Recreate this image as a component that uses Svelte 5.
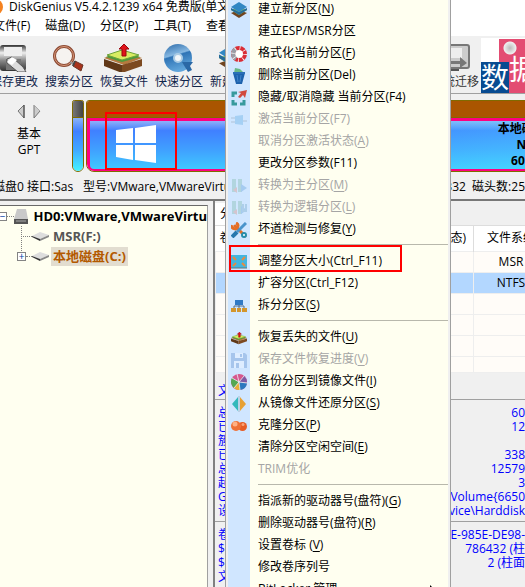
<script>
    const menus = [
        ["文件", "F"],
        ["磁盘", "D"],
        ["分区", "P"],
        ["工具", "T"],
        ["查看", "V"],
    ];

    const tools = [
        { icon: "save", label: "保存更改" },
        { icon: "search", label: "搜索分区" },
        { icon: "restore", label: "恢复文件" },
        { icon: "quick", label: "快速分区" },
        { icon: "layers", label: "新建分区" },
    ];

    const contextItems = [
        { label: "建立新分区", key: "N", icon: "layers" },
        { label: "建立ESP/MSR分区" },
        { label: "格式化当前分区", key: "F", icon: "format" },
        { label: "删除当前分区(Del)", icon: "trash" },
        { label: "隐藏/取消隐藏 当前分区(F4)", icon: "hide" },
        { label: "激活当前分区(F7)", icon: "plug", disabled: true },
        { label: "取消分区激活状态", key: "A", disabled: true },
        { label: "更改分区参数(F11)" },
        { label: "转换为主分区", key: "M", icon: "primary", disabled: true },
        { label: "转换为逻辑分区", key: "L", icon: "logical", disabled: true },
        { label: "坏道检测与修复", key: "Y", icon: "repair" },
        null,
        { label: "调整分区大小(Ctrl_F11)", icon: "resize", marked: true },
        { label: "扩容分区(Ctrl_F12)" },
        { label: "拆分分区", key: "S", icon: "split" },
        null,
        { label: "恢复丢失的文件", key: "U", icon: "restore" },
        { label: "保存文件恢复进度", key: "V", icon: "floppy", disabled: true },
        { label: "备份分区到镜像文件", key: "I", icon: "backup" },
        { label: "从镜像文件还原分区", key: "S", icon: "mirror" },
        { label: "克隆分区", key: "P", icon: "clone" },
        { label: "清除分区空闲空间", key: "E" },
        { label: "TRIM优化", disabled: true },
        null,
        { label: "指派新的驱动器号(盘符)", key: "G" },
        { label: "删除驱动器号(盘符)", key: "R" },
        { label: "设置卷标 ", key: "V" },
        { label: "修改卷序列号" },
        { label: "BitLocker 管理", submenu: true },
    ];

    const details = [
        ["总容量:", "60"],
        ["已用空间:", "12"],
        ["簇大小:", ""],
        ["已用簇数:", "338"],
        ["总扇区数:", "12579"],
        ["起始扇区号:", "3"],
        ["GUID路径:", "Volume{6650"],
        ["设备路径:", "vice\\Harddisk"],
    ];

    const ntfs = [
        ["卷序列号:", "E-985E-DE98-"],
        ["$MFT簇号:", "786432 (柱"],
        ["$MFTMirr簇号:", "2 (柱面"],
        ["文件记录大小:", ""],
    ];
</script>

{#snippet glyph(name)}
    {#if name === "save"}
        <svg viewBox="0 0 28 28">
            <defs><linearGradient id="steel" x2="0" y2="1"><stop stop-color="#333"/><stop offset=".3" stop-color="#eee"/><stop offset=".6" stop-color="#888"/><stop offset="1" stop-color="#333"/></linearGradient></defs>
            <rect x="1" y="1" width="26" height="26" rx="3" fill="url(#steel)"/>
            <rect x="5" y="3" width="18" height="9" fill="#eee"/>
            <rect x="7" y="15" width="15" height="11" fill="#777"/>
            <path d="M8 15l5-2 11 10 3 5h-8L8 19z" fill="#ddd" stroke="#555"/>
            <path d="M13 13l-5 5 5 3 5-5z" fill="#fff"/>
        </svg>
    {:else if name === "search"}
        <svg viewBox="0 0 32 28">
            <circle cx="12" cy="12" r="9.5" fill="#f6f3f0" stroke="#8c4a34" stroke-width="3"/>
            <circle cx="12" cy="12" r="9.5" fill="none" stroke="#d99a7c"/>
            <path d="M18 18l5 3" stroke="#999" stroke-width="2"/>
            <path d="M23 17l8 4-2 6-8-5z" fill="#a8341d" stroke="#6b3526"/>
            <path d="M23 17l-2 5" stroke="#444" stroke-width="2"/>
        </svg>
    {:else if name === "restore"}
        <svg viewBox="0 0 38 28">
            <path d="M0 14l18-7 20 7-18 7z" fill="#b57a3e"/>
            <path d="M0 15l18 6v8L0 22z" fill="#603817"/>
            <path d="M38 15l-20 6v8l20-7z" fill="#7d4a20"/>
            <path d="M2 13l16-7 18 7-18 5z" fill="#4e9a3c"/>
            <path d="M3 11l15-5 17 5-17 5z" fill="#d8ec62" stroke="#6da33a"/>
            <path d="M20 0l5 5h-3v7h-4V5h-3z" fill="#e0141b" stroke="#98080d"/>
        </svg>
    {:else if name === "quick"}
        <svg viewBox="0 0 30 28">
            <defs><linearGradient id="disc" x2="0.3" y2="1"><stop stop-color="#2a69a8"/><stop offset=".45" stop-color="#86b8e2"/><stop offset=".5" stop-color="#2f74b6"/><stop offset="1" stop-color="#5fa4da"/></linearGradient></defs>
            <circle cx="15" cy="14" r="14" fill="url(#disc)"/>
            <path d="M19 18h11l-3 4 2 4-4 2z" fill="#2a68a6"/>
            <circle cx="15" cy="14" r="4" fill="#f0f5f9" stroke="#aacbe4" stroke-width="2"/>
        </svg>
    {:else if name === "layers"}
        <svg viewBox="0 0 16 16">
            <path d="M0 11l8-3 8 3-8 5z" fill="#70441f"/>
            <path d="M0 8l8-3 8 3-8 5z" fill="#8ac35b"/>
            <path d="M0 6l8 4 8-4v2l-8 5-8-5z" fill="#266b99"/>
            <path d="M0 5l8-5 8 5-8 5z" fill="#3187c3"/>
        </svg>
    {:else if name === "format"}
        <svg viewBox="0 0 16 16">
            <circle cx="8" cy="8" r="6" fill="#fff" stroke="#d92d37" stroke-width="4"/>
            <path d="M5 2.8A6 6 0 0 0 5 13" fill="none" stroke="#999da6" stroke-width="4"/>
            <circle cx="8" cy="8" r="6" fill="none" stroke="#f7f1f3" stroke-width="4" stroke-dasharray=".8 3.9"/>
        </svg>
    {:else if name === "trash"}
        <svg viewBox="0 0 16 16">
            <path d="M3 5l1-5 5 1 4 4z" fill="#69b987"/>
            <path d="M2 5h12l-3 11H5z" fill="#1d62ad"/>
            <path d="M6 7l1 7M10 7l-1 7" stroke="#3f84cc"/>
            <path d="M2 5h12" stroke="#2a6fb8" stroke-width="2"/>
        </svg>
    {:else if name === "hide"}
        <svg viewBox="0 0 16 16">
            <path d="M2 7V3h4M2 10v4h4M9 14h4v-4" fill="none" stroke="#389a9d" stroke-width="3"/>
            <path d="M7 2l9-2-2 8-2-3-3 3-2-1 3-4z" fill="#d1493f"/>
        </svg>
    {:else if name === "plug"}
        <svg viewBox="0 0 16 16">
            <path d="M0 6h5M0 10h5M12 9h4" stroke="#9badc0" stroke-width="2"/>
            <path d="M4 4l8-1v10l-8-1z" fill="#469edc"/>
        </svg>
    {:else if name === "primary" || name === "logical"}
        <svg viewBox="0 0 16 16">
            <path d="M1 1h4v13H1zM7 1h4v13H7z" fill="#6db198"/>
            <path d="M10 6l6 4-6 4z" fill="#438ed1"/>
            <path d="M6 9l-4 3 4 3z" fill="#df7961"/>
            {#if name === "logical"}<path d="M12 4v7h3V4" fill="none" stroke="#5f9ab8" stroke-width="2"/>{/if}
        </svg>
    {:else if name === "repair"}
        <svg viewBox="0 0 16 16">
            <path d="M4 4l10 10" stroke="#e46f27" stroke-width="3" stroke-linecap="round"/>
            <path d="M1 3a3 3 0 1 0 4-2" fill="none" stroke="#e46f27" stroke-width="3"/>
            <path d="M15 1L6 10" stroke="#4a94cb" stroke-width="3"/>
            <path d="M6 10l-5 5" stroke="#2776ad" stroke-width="4"/>
            <circle cx="13" cy="13" r="2" fill="#fff" stroke="#248dad" stroke-width="2"/>
        </svg>
    {:else if name === "resize"}
        <svg viewBox="0 0 16 16">
            <path d="M0 1h16v13H0z" fill="#42b6e0"/>
            <path d="M2 3l3 3M14 3l-3 3M2 12l3-3M14 12l-3-3" stroke="#e58b42" stroke-width="2"/>
            <path d="M0 14h16" stroke="#62777b"/>
        </svg>
    {:else if name === "split"}
        <svg viewBox="0 0 16 16">
            <path d="M8 5v6M3 11V8h10v3" fill="none" stroke="#4b6b8c"/>
            <path d="M4 2h8v5H4z" fill="#3079c4"/>
            <path d="M0 10h5v4H0zM6 10h4v4H6zM11 10h5v4h-5z" fill="#d3962c"/>
        </svg>
    {:else if name === "floppy"}
        <svg viewBox="0 0 16 16">
            <path d="M0 1h14l2 2v13H0z" fill="#477bc1"/>
            <path d="M4 1h8v5H4zM3 9h10v7H3z" fill="#fff"/>
            <path d="M9 2h2v3H9zM5 11h3v5H5z" fill="#477bc1"/>
        </svg>
    {:else if name === "backup"}
        <svg viewBox="0 0 16 16">
            <circle cx="8" cy="8" r="8" fill="#d5588e"/>
            <path d="M8 8L1 4a8 8 0 0 0 2 10z" fill="#53a853"/>
            <path d="M8 8l-5 6a8 8 0 0 0 6 2z" fill="#e7b138"/>
            <path d="M8 8l1 8a8 8 0 0 0 7-7z" fill="#2b77be"/>
            <path d="M8 8h8a8 8 0 0 0-3-6z" fill="#7d59a4"/>
            <path d="M1 4l7 4 5-6M8 8l-5 6M8 8l1 8M8 8l8 1M8 8L6 0" fill="none" stroke="#ecf5f6" stroke-width=".8"/>
        </svg>
    {:else if name === "mirror"}
        <svg viewBox="0 0 16 16">
            <path d="M7 1v14L1 8z" fill="#32b8bc"/>
            <path d="M9 1v14l6-7z" fill="#e7a134"/>
            <path d="M8 0v16" stroke="#a5bccb"/>
        </svg>
    {:else if name === "clone"}
        <svg viewBox="0 0 16 16">
            <circle cx="11.5" cy="8.5" r="4.5" fill="#e65b25"/>
            <circle cx="5" cy="8" r="5" fill="#ef7137"/>
            <circle cx="4" cy="6" r="2.5" fill="#ffb084"/>
            <circle cx="12" cy="6.5" r="1.5" fill="#f9a277"/>
        </svg>
    {:else if name === "migrate"}
        <svg viewBox="0 0 32 28">
            <rect x="1" y="1" width="30" height="23" rx="2" fill="#ccc" stroke="#777" stroke-width="2"/>
            <path d="M4 4h20v10H4z" fill="#eee"/>
            <path d="M12 17h10v-4l7 6-7 5v-4H12z" fill="#777"/>
            <path d="M12 25h9v2h-9z" fill="#555"/>
        </svg>
    {:else if name === "drive"}
        <svg viewBox="0 0 14 15">
            <path d="M3 0h9l2 10H0z" fill="#c9c9c9"/>
            <path d="M0 10h14v5H0z" fill="#555"/>
            <path d="M2 12h10" stroke="#aaa"/>
        </svg>
    {:else if name === "volume"}
        <svg viewBox="0 0 17 9">
            <path d="M0 4l8-4 9 3-9 4z" fill="#ddd"/>
            <path d="M0 4l8 3v2L0 5z" fill="#333"/>
            <path d="M8 7l9-4v2L8 9z" fill="#888"/>
        </svg>
    {/if}
{/snippet}

<div class="window">
    <header class="title">
        <svg class="logo" viewBox="0 0 16 16"><circle cx="8" cy="8" r="8" fill="#f58220"/></svg>
        DiskGenius V5.4.2.1239 x64 免费版(单文件版)
    </header>

    <nav class="menubar">
        {#each menus as [label, key]}
            <button>{label}({key})</button>
        {/each}
    </nav>

    <div class="toolbar">
        {#each tools as tool}
            <button class="tool">
                <span class="tool-icon">{@render glyph(tool.icon)}</span>
                {tool.label}
            </button>
        {/each}
        <button class="tool last">
            <span class="tool-icon">{@render glyph("migrate")}</span>
            系统迁移
        </button>
        <div class="banner">
            <span class="banner-pink">据</span>
            <span class="banner-blue">数</span>
        </div>
    </div>

    <section class="disk">
        <div class="disk-nav">
            <div class="arrows">
                <button aria-label="上一个磁盘"><svg viewBox="0 0 8 15"><path d="M7 1v13L1 7z" fill="#ccc" stroke="#777"/><path d="M7 1v13" stroke="#444"/></svg></button>
                <button aria-label="下一个磁盘"><svg viewBox="0 0 8 15"><path d="M1 1v13l6-7z" fill="#ccc" stroke="#777"/><path d="M1 1l6 6" stroke="#aaa"/></svg></button>
            </div>
            <span>基本</span>
            <span>GPT</span>
        </div>
        <div class="part small">
            <div class="cap"></div>
            <div class="fill"></div>
        </div>
        <div class="part main">
            <div class="cap"></div>
            <div class="fill">
                <svg class="winlogo" viewBox="0 0 40 38">
                    <path d="M0 5l17-2v15H0zM19 3l21-3v18H19zM0 20h17v15L0 32zM19 20h21v18l-21-3z" fill="#fff"/>
                </svg>
                <div class="caption">本地磁盘(C:)<br>NTFS<br>60.0GB</div>
            </div>
            <div class="marker"></div>
        </div>
    </section>

    <div class="disk-info">
        <span>磁盘0 接口:Sas</span>
        <span>型号:VMware,VMwareVirtualS</span>
        <span class="heads">332&nbsp; 磁头数:25</span>
    </div>

    <div class="work">
        <aside class="tree">
            <div class="node root"><i class="box">−</i><i class="dots"></i><span class="hd">{@render glyph("drive")}</span><b>HD0:VMware,VMwareVirtu</b></div>
            <div class="node child"><i class="dots"></i><span class="vol">{@render glyph("volume")}</span><b class="msr">MSR(F:)</b></div>
            <div class="node child"><i class="box">+</i><i class="dots"></i><span class="vol">{@render glyph("volume")}</span><b class="selected">本地磁盘(C:)</b></div>
        </aside>

        <main class="pane">
            <div class="tabs"><button>分区参数</button></div>
            <table>
                <thead>
                    <tr><th class="name">卷标</th><th class="state">序号(状态)</th><th class="fs">文件系统</th></tr>
                </thead>
                <tbody>
                    <tr><td></td><td></td><td>MSR</td></tr>
                    <tr class="active"><td></td><td></td><td>NTFS</td></tr>
                    <tr><td></td><td></td><td></td></tr>
                    <tr><td></td><td></td><td></td></tr>
                    <tr><td></td><td></td><td></td></tr>
                    <tr class="short"><td></td><td></td><td></td></tr>
                </tbody>
            </table>
            <div class="fs-type">文件系统类型:</div>
            <dl>
                {#each details as [label, value]}
                    <div><dt>{label}</dt><dd>{value}</dd></div>
                {/each}
            </dl>
            <dl>
                {#each ntfs as [label, value]}
                    <div><dt>{label}</dt><dd>{value}</dd></div>
                {/each}
            </dl>
        </main>
    </div>

    <div class="context" role="menu">
        {#each contextItems as item}
            {#if item}
                <button class="item" class:marked={item.marked} role="menuitem" disabled={item.disabled}>
                    <span class="item-icon">{#if item.icon}{@render glyph(item.icon)}{/if}</span>
                    <span class="item-text">{item.label}{#if item.key}(<u>{item.key}</u>){/if}</span>
                    {#if item.submenu}<span class="more"></span>{/if}
                </button>
            {:else}
                <div class="rule"></div>
            {/if}
        {/each}
    </div>
</div>

<style>
    :global(body) {
        margin: 0;
        overflow: hidden;
    }

    *,
    *::after {
        box-sizing: border-box;
    }

    .window {
        position: relative;
        display: flex;
        flex-direction: column;
        height: 100vh;
        overflow: hidden;
        background: #f0f0f0;
        color: #000;
        font: 12px/16px "Open Sans", "Noto Sans CJK SC", sans-serif;
        white-space: nowrap;
    }

    button {
        padding: 0;
        border: 0;
        background: none;
        color: inherit;
        font: inherit;
        white-space: pre;
    }

    svg {
        display: block;
        width: 100%;
        height: 100%;
    }

    .title {
        display: flex;
        align-items: center;
        gap: 6px;
        height: 16px;
        margin-left: -13px;
        padding-bottom: 2px;
        background: #fff;
    }

    .logo {
        width: 16px;
        height: 16px;
    }

    .menubar {
        display: flex;
        gap: 15px;
        height: 20px;
        margin-left: -7px;
        background: #fff;
    }

    .toolbar {
        display: flex;
        height: 58px;
        margin-left: -15px;
        border-bottom: 1px solid #a0a0a0;
        color: #10244a;
    }

    .tool {
        display: flex;
        flex: none;
        flex-direction: column;
        align-items: center;
        width: 55px;
        padding-top: 8px;
    }

    .tool-icon {
        height: 28px;
        margin-bottom: 2px;
    }

    .tool-icon :global(svg) {
        width: auto;
    }

    .last {
        margin-left: auto;
        color: #333;
    }

    .banner {
        position: relative;
        width: 44px;
        margin-top: 2px;
        overflow: hidden;
        background: #fff;
        color: #fff;
        font-size: 28px;
    }

    .banner-pink {
        position: absolute;
        inset: 1px 0 0 18px;
        padding: 16px 0 0 10px;
        background: radial-gradient(circle at 11px 9px, #bbb 0, #eee 6px, #e34c72 7px);
        line-height: 28px;
    }

    .banner-blue {
        position: absolute;
        left: 0;
        bottom: 0;
        width: 28px;
        height: 31px;
        background: #084b91;
        line-height: 31px;
    }

    .disk {
        display: flex;
        height: 79px;
        padding-top: 6px;
    }

    .disk-nav {
        display: flex;
        flex-direction: column;
        align-items: center;
        width: 58px;
        margin-right: 14px;
        padding-top: 4px;
    }

    .arrows {
        display: flex;
        gap: 8px;
        margin-bottom: 7px;
    }

    .arrows button {
        width: 8px;
        height: 15px;
    }

    .part {
        position: relative;
        display: flex;
        flex-direction: column;
        height: 72px;
        border: 1px solid #806a00;
        border-radius: 3px 3px 8px 8px;
        overflow: hidden;
    }

    .cap {
        flex: none;
        height: 17px;
        border-bottom: 1px solid #806a00;
        background: #aa5500;
    }

    .small {
        width: 12px;
        margin-right: 2px;
    }

    .small .cap {
        background: linear-gradient(90deg, #777, #444);
    }

    .fill {
        display: flex;
        flex: 1;
        justify-content: space-between;
        background: linear-gradient(#8cb4f8, #4080ff 25%, #40a8ff 60%, #44f4ff);
    }

    .main {
        flex: 1;
        margin-right: -44px;
    }

    .main .fill {
        border: 3px solid #ff0080;
        border-radius: 0 0 0 7px;
        background: linear-gradient(90deg, transparent 40%, #50f0ff55), linear-gradient(#90b0f8, #4080ff 20%, #40a0ff 60%, #40c8ff);
    }

    .winlogo {
        width: 40px;
        height: 38px;
        margin: 4px 0 0 26px;
    }

    .caption {
        font-weight: bold;
        line-height: 16px;
        text-align: center;
    }

    .marker {
        position: absolute;
        top: 11px;
        left: 18px;
        width: 72px;
        height: 58px;
        border: 2px solid #f00;
    }

    .disk-info {
        display: flex;
        gap: 10px;
        height: 28px;
        margin-left: -7px;
        padding-top: 6px;
        border-bottom: 2px solid #777;
    }

    .heads {
        margin-left: auto;
    }

    .work {
        display: flex;
        flex: 1;
        min-height: 0;
    }

    .tree {
        width: 208px;
        margin: 4px 5px 0 0;
        border-top: 1px solid #696969;
        border-right: 1px solid #a0a0a0;
        background: #fffff0;
        font-size: 13px;
        overflow: hidden;
    }

    .node {
        display: flex;
        align-items: center;
        height: 20px;
    }

    .box {
        display: block;
        flex: none;
        width: 9px;
        height: 9px;
        border: 1px solid #848484;
        background: #fff;
        color: #0040a0;
        font: 10px/7px "Open Sans", sans-serif;
        text-align: center;
    }

    .root .box {
        margin-left: -2px;
    }

    .dots {
        width: 7px;
        border-top: 1px dotted #808080;
    }

    .hd {
        flex: none;
        width: 14px;
        height: 15px;
        margin-right: 6px;
    }

    .child {
        padding-left: 17px;
        background: repeating-linear-gradient(#808080 0 1px, transparent 1px 2px) 21px 0 / 1px 20px no-repeat;
    }

    .child:last-child {
        background-size: 1px 10px;
    }

    .child .dots {
        width: 11px;
        margin-left: 4px;
    }

    .child .box + .dots {
        width: 6px;
        margin-left: 0;
    }

    .vol {
        width: 17px;
        height: 9px;
        margin-right: 2px;
    }

    .msr {
        padding: 0 2px;
        color: #555;
    }

    .selected {
        padding: 1px 2px;
        background: #e2ddd0;
        color: #b35900;
        line-height: 17px;
    }

    .pane {
        flex: 1;
        min-width: 0;
        border-left: 2px solid #808080;
        overflow: hidden;
    }

    .tabs {
        height: 25px;
        padding-top: 2px;
        border-bottom: 1px solid #ddd;
    }

    .tabs button {
        padding: 0 5px;
        background: #fff;
        line-height: 22px;
    }

    table {
        width: calc(100% + 24px);
        border-collapse: collapse;
        table-layout: fixed;
        background: #fffcf8;
    }

    th {
        height: 25px;
        padding: 0;
        border-right: 1px solid #ddd;
        background: #fff;
        font-weight: normal;
    }

    td {
        height: 21px;
        padding: 0;
        border: 1px solid #eee;
        line-height: 16px;
        text-align: center;
    }

    .short td {
        height: 16px;
    }

    .name {
        width: 60px;
        padding-left: 4px;
        text-align: left;
    }

    .state {
        padding-right: 7px;
        text-align: right;
    }

    .fs {
        width: 75px;
    }

    .active {
        background: #b3d7ff;
    }

    .fs-type {
        height: 27px;
        padding: 10px 0 0 3px;
        border-bottom: 1px solid #a0a0a0;
        color: #00f;
    }

    dl {
        margin: 0;
        padding: 6px 0 3px 3px;
        border-bottom: 1px solid #a0a0a0;
        color: #00f;
        line-height: 14px;
    }

    dl div {
        display: flex;
        justify-content: space-between;
        height: 14px;
    }

    dd {
        margin: 0;
    }

    .context {
        position: absolute;
        top: -5px;
        left: 225px;
        width: 226px;
        padding: 2px;
        border: 1px solid #a0a0a0;
        background: #f0f0f0;
    }

    .item {
        position: relative;
        display: flex;
        align-items: center;
        width: 100%;
        height: 22px;
        background: linear-gradient(90deg, #d0e6ff 22px, #fffff0 22px);
        text-align: left;
    }

    .item-icon {
        width: 16px;
        height: 16px;
        margin: 2px 11px 0 3px;
    }

    .item:disabled {
        color: #a5a5a5;
    }

    .item:disabled .item-icon {
        opacity: .3;
    }

    u {
        text-underline-offset: 2px;
    }

    .marked {
        z-index: 1;
    }

    .marked::after {
        content: "";
        position: absolute;
        top: -5px;
        left: 1px;
        width: 173px;
        height: 27px;
        border: 2px solid #f00;
    }

    .rule {
        height: 10px;
        padding: 4px 0 0 30px;
        background: linear-gradient(90deg, #d0e6ff 22px, #fffff0 22px);
    }

    .rule::before {
        content: "";
        display: block;
        height: 1px;
        background: #b8b8ac;
    }

    .more {
        margin: 0 10px 0 auto;
        border: 4px solid transparent;
        border-left-color: #000;
    }
</style>
